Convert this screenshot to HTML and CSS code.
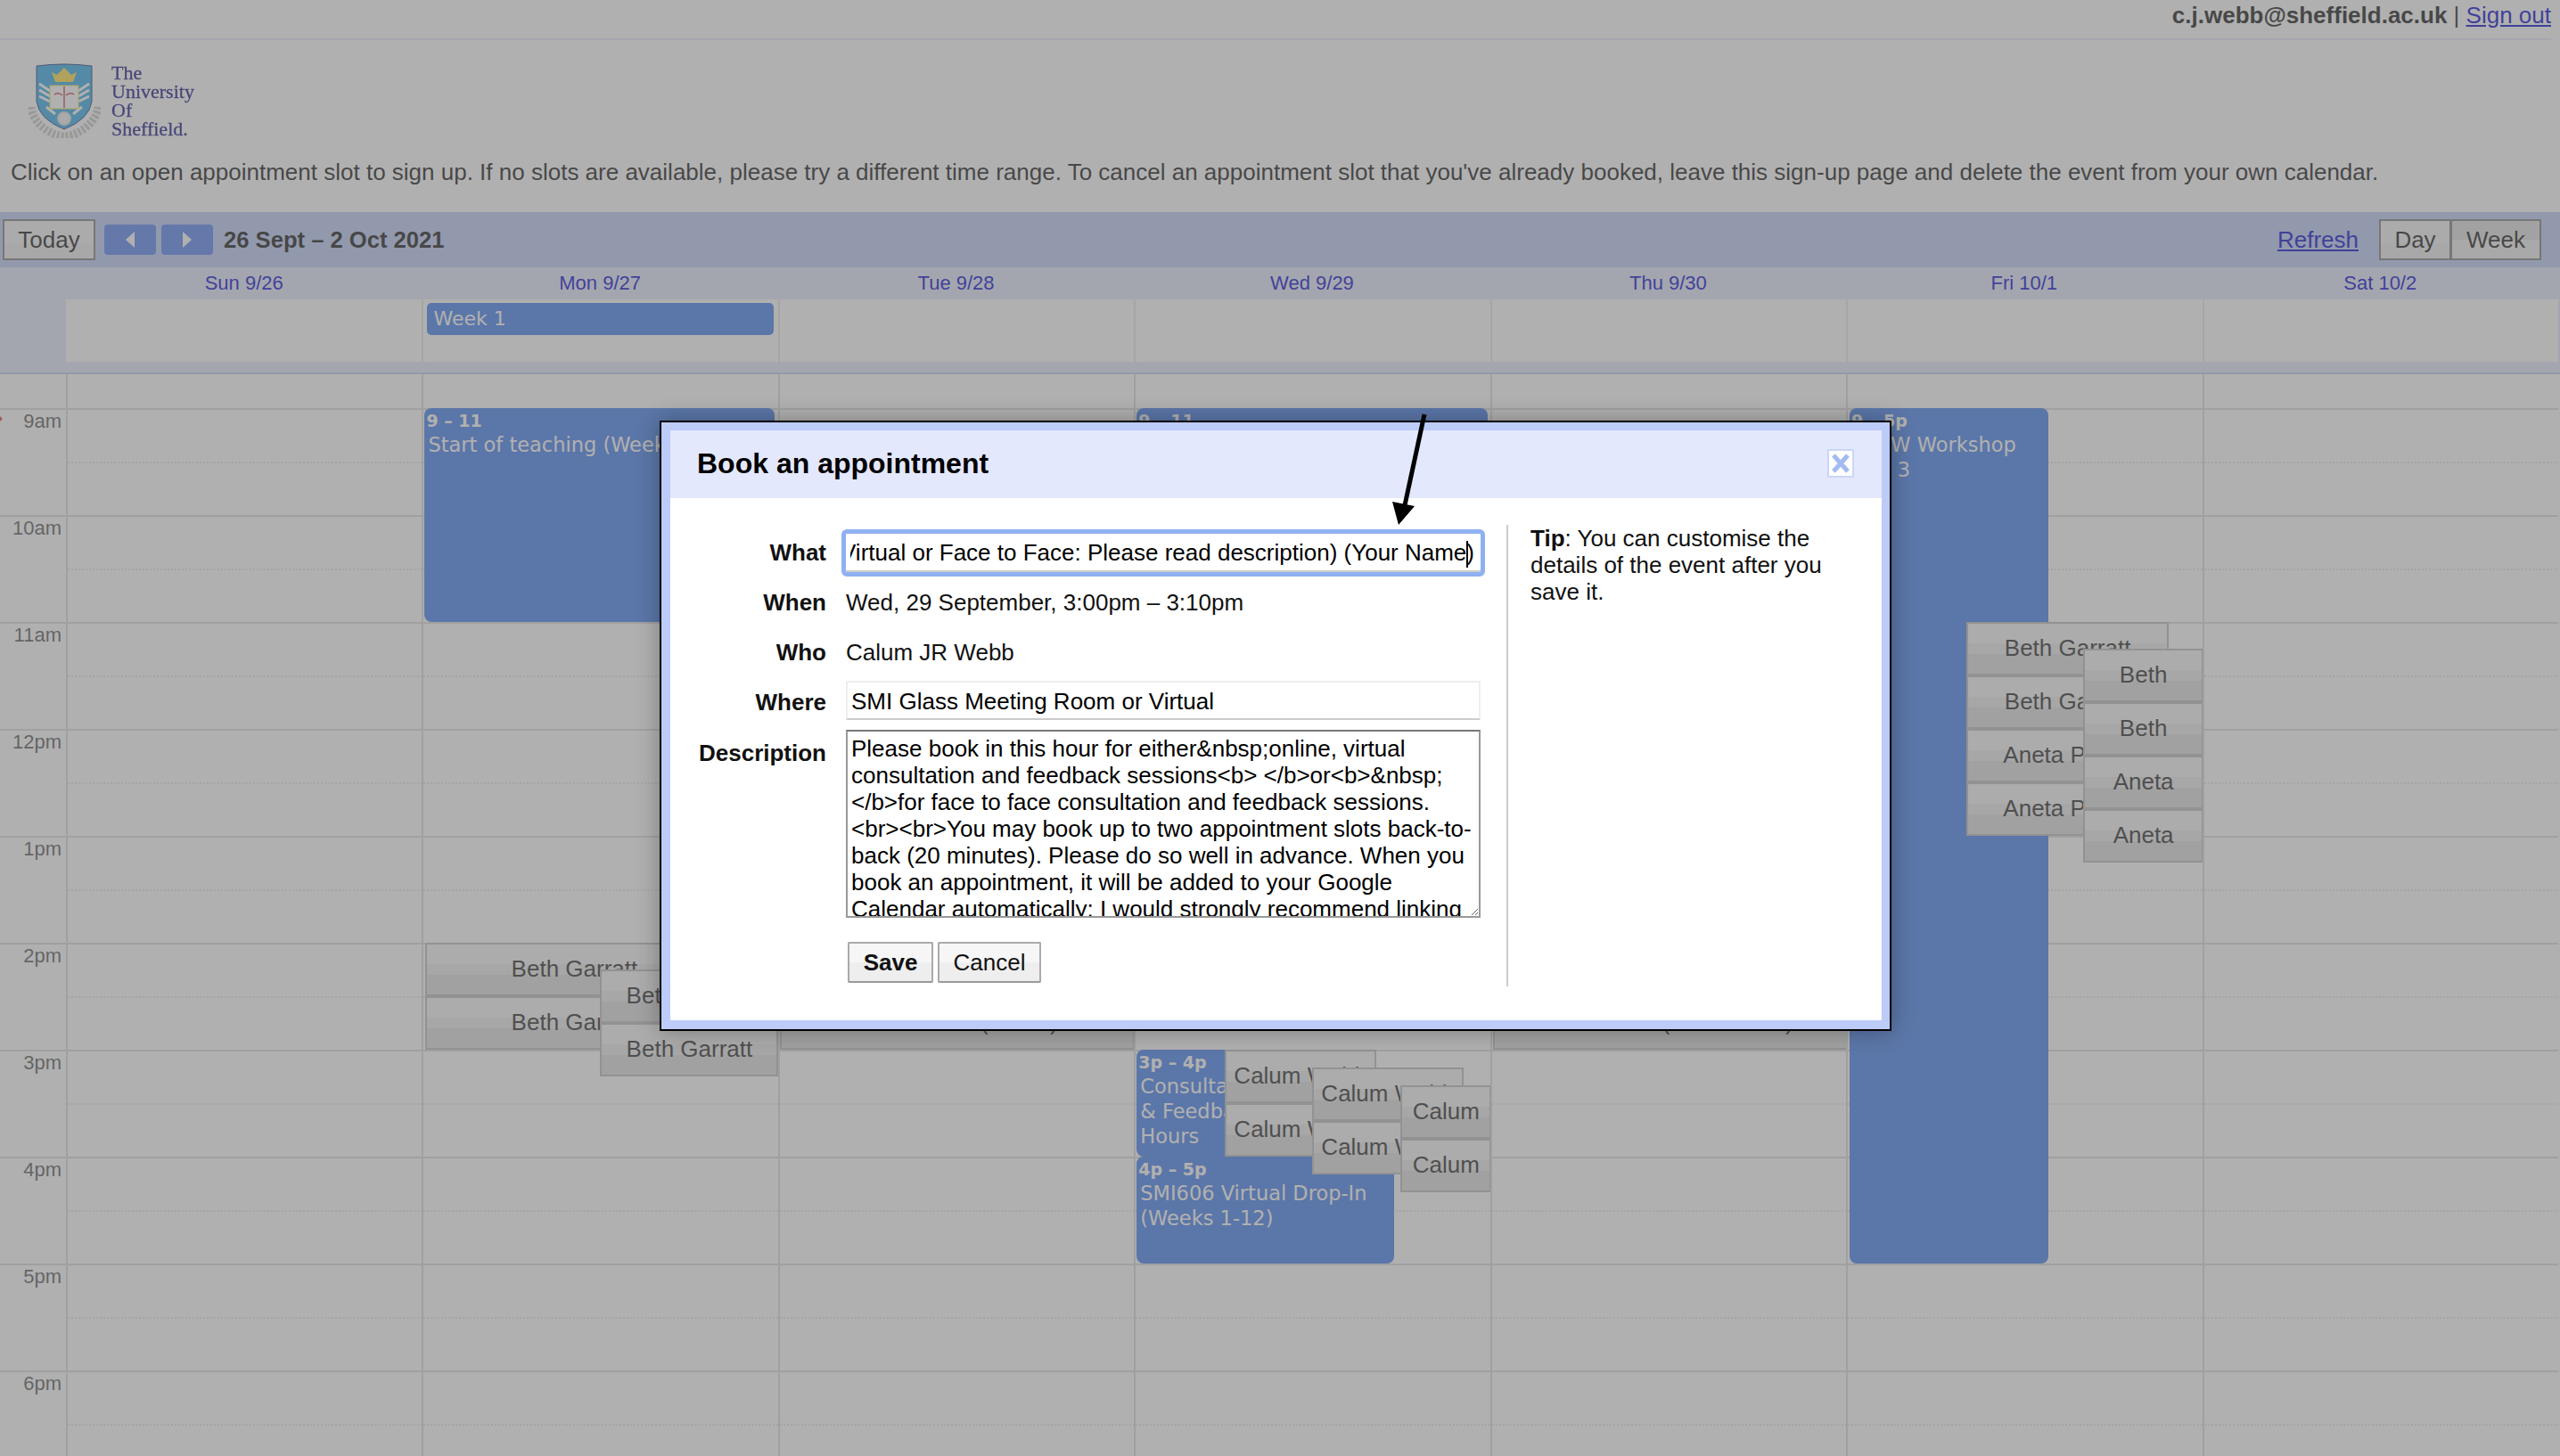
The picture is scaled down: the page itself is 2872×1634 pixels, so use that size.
FILE: index.html
```html
<!DOCTYPE html>
<html lang="en">
  <head>
    <meta charset="UTF-8" />
    <meta name="viewport" content="width=device-width, initial-scale=1.0" />
    <title>Book an appointment</title>
    <link rel="stylesheet" href="styles.css">
  </head>
  <body>
    <div class="userbar">
      <b>c.j.webb@sheffield.ac.uk</b>&nbsp;|&nbsp;<a href="#">Sign out</a>
    </div>

    <div class="brand">
      <svg class="crest" viewBox="0 0 81 85">
        <path class="ribbon" d="M3 50 C4 66 22 82 40 83 C58 82 77 66 78 50" />
        <path class="shield" d="M9 4 Q40 0 71 4 L71 44 Q68 64 40 75 Q12 64 9 44 Z" />
        <path class="crown" d="M26 11 L32 14 L40 6 L48 14 L54 11 L50 22 H30 Z" />
        <path class="rays" d="M12 24 L24 32 M12 31 L24 38 M12 38 L24 44 M68 24 L56 32 M68 31 L56 38 M68 38 L56 44 M20 50 L30 58 M60 50 L50 58" />
        <rect class="book" x="24" y="26" width="32" height="26" />
        <path class="book-mark" d="M29 36 Q34 33 38 37 M42 37 Q47 33 51 36 M40 27 V51" />
        <circle class="rose" cx="40" cy="63" r="7" />
      </svg>
      <div class="brand-name">The<br>University<br>Of<br>Sheffield.</div>
    </div>

    <p class="intro">Click on an open appointment slot to sign up. If no slots are available, please try a different time range. To cancel an appointment slot that you've already booked, leave this sign-up page and delete the event from your own calendar.</p>

    <div class="toolbar">
      <button class="btn today">Today</button>
      <span class="nav-btn"><i class="tri-left"></i></span>
      <span class="nav-btn"><i class="tri-right"></i></span>
      <span class="range">26 Sept – 2 Oct 2021</span>
      <a class="refresh" href="#">Refresh</a>
      <div class="view-switch">
        <button class="btn view-day">Day</button>
        <button class="btn view-week">Week</button>
      </div>
    </div>

    <div class="day-heads">
      <a href="#">Sun 9/26</a>
      <a href="#">Mon 9/27</a>
      <a href="#">Tue 9/28</a>
      <a href="#">Wed 9/29</a>
      <a href="#">Thu 9/30</a>
      <a href="#">Fri 10/1</a>
      <a href="#">Sat 10/2</a>
    </div>

    <div class="allday">
      <div class="allday-cell"></div>
      <div class="allday-cell"><div class="allday-event">Week 1</div></div>
      <div class="allday-cell"></div>
      <div class="allday-cell"></div>
      <div class="allday-cell"></div>
      <div class="allday-cell"></div>
      <div class="allday-cell"></div>
    </div>

    <div class="week">
      <div class="hours">
        <i class="now-mark"></i>
        <div>9am</div>
        <div>10am</div>
        <div>11am</div>
        <div>12pm</div>
        <div>1pm</div>
        <div>2pm</div>
        <div>3pm</div>
        <div>4pm</div>
        <div>5pm</div>
        <div>6pm</div>
      </div>

      <div class="day"></div>

      <div class="day">
        <div class="event mon-teaching"><b>9 – 11</b><span>Start of teaching (Week 1)</span></div>
        <div class="slot beth-a r1">Beth Garratt</div>
        <div class="slot beth-a r2">Beth Garratt</div>
        <div class="slot beth-b r1">Beth Garratt</div>
        <div class="slot beth-b r2">Beth Garratt</div>
      </div>

      <div class="day">
        <div class="slot wide tue-slot">Beth Garratt (Room)</div>
      </div>

      <div class="day">
        <div class="event wed-teaching"><b>9 – 11</b><span>Consultation</span></div>
        <div class="event wed-hours"><b>3p – 4p</b><span>Consultation &amp; Feedback Hours</span></div>
        <div class="event wed-dropin"><b>4p – 5p</b><span>SMI606 Virtual Drop-In (Weeks 1-12)</span></div>
        <div class="slot calum-a r1">Calum Webb</div>
        <div class="slot calum-a r2">Calum Webb</div>
        <div class="slot calum-b r1">Calum Webb</div>
        <div class="slot calum-b r2">Calum Webb</div>
        <div class="slot calum-c r1">Calum Webb</div>
        <div class="slot calum-c r2">Calum Webb</div>
      </div>

      <div class="day">
        <div class="slot wide thu-slot">Beth Garratt (Virtual chat)</div>
      </div>

      <div class="day">
        <div class="event fri-workshop"><b>9 – 5p</b><span>RM W Workshop Wk. 3</span></div>
        <div class="slot fri-a r1">Beth Garratt</div>
        <div class="slot fri-a r2">Beth Garratt</div>
        <div class="slot fri-a r3">Aneta Pxxxx</div>
        <div class="slot fri-a r4">Aneta Pxxxx</div>
        <div class="slot fri-b r1">Beth Garratt</div>
        <div class="slot fri-b r2">Beth Garratt</div>
        <div class="slot fri-b r3">Aneta Pxxxx</div>
        <div class="slot fri-b r4">Aneta Pxxxx</div>
      </div>

      <div class="day"></div>
    </div>

    <div class="backdrop"></div>

    <div class="dialog">
      <div class="dialog-title">
        <span>Book an appointment</span>
        <span class="dialog-close">
          <svg viewBox="0 0 26 28"><path d="M5 5 L21 23 M21 5 L5 23" /></svg>
        </span>
      </div>
      <div class="dialog-body">
        <div class="form">
          <div class="row row-what">
            <label>What</label>
            <div class="what-input"><div class="what-text"><span>Consultation (Virtual or Face to Face: Please read description) (Your Name<i class="caret"></i>)</span></div></div>
          </div>
          <div class="row row-text">
            <label>When</label>
            <div>Wed, 29 September, 3:00pm – 3:10pm</div>
          </div>
          <div class="row row-text">
            <label>Who</label>
            <div>Calum JR Webb</div>
          </div>
          <div class="row row-where">
            <label>Where</label>
            <input class="where-input" type="text" value="SMI Glass Meeting Room or Virtual">
          </div>
          <div class="row row-desc">
            <label>Description</label>
            <textarea class="desc-input">Please book in this hour for either&amp;nbsp;online, virtual consultation and feedback sessions&lt;b&gt; &lt;/b&gt;or&lt;b&gt;&amp;nbsp;&lt;/b&gt;for face to face consultation and feedback sessions.&lt;br&gt;&lt;br&gt;You may book up to two appointment slots back-to-back (20 minutes). Please do so well in advance. When you book an appointment, it will be added to your Google Calendar automatically; I would strongly recommend linking it to your phone.</textarea>
          </div>
          <div class="actions">
            <button class="dlg-btn save">Save</button>
            <button class="dlg-btn cancel">Cancel</button>
          </div>
        </div>
        <div class="tip"><b>Tip</b>: You can customise the details of the event after you save it.</div>
      </div>
    </div>

    <svg class="arrow" viewBox="0 0 50 130">
      <path d="M43 2 L21 104" />
      <polygon points="14,126 7,100 32,105" />
    </svg>
  </body>
</html>
```

FILE: styles.css
```css
* {
  box-sizing: border-box;
  margin: 0;
  padding: 0;
}

html, body {
  height: 100%;
}

body {
  position: relative;
  overflow: hidden;
  background: #fff;
  color: #111;
  font-family: "Liberation Sans", Arial, sans-serif;
  font-size: 26px;
  line-height: 30px;
}

a {
  color: #0000cc;
}

/* Top of the page */
.userbar {
  height: 45px;
  margin-right: 10px;
  border-bottom: 2px solid #e3e8fc;
  padding-top: 2px;
  text-align: right;
}

.brand {
  display: flex;
  gap: 12px;
  height: 85px;
  margin: 25px 0 0 32px;
}

.crest {
  width: 81px;
  height: 85px;
  filter: blur(0.6px);
}

.shield { fill: #2ea8e6; stroke: #2b3a80; stroke-width: 1; }
.ribbon { fill: none; stroke: #c8c8c8; stroke-width: 9; stroke-dasharray: 3 2; }
.crown { fill: #ffe040; }
.rays { fill: none; stroke: #fff; stroke-width: 3; }
.book { fill: #fff; stroke: #ffe040; }
.book-mark { fill: none; stroke: #d04050; stroke-width: 1.5; }
.rose { fill: #f2f2f2; stroke: #ddd; stroke-width: 2; }

.brand-name {
  padding-top: 1px;
  color: #0e0e7f;
  font-family: "Liberation Serif", serif;
  font-size: 22px;
  line-height: 21px;
  -webkit-text-stroke: 0.3px #0e0e7f;
  filter: blur(0.4px);
}

.intro {
  margin: 23px 0 30px 12px;
  white-space: nowrap;
}

/* Calendar toolbar */
.toolbar {
  display: flex;
  align-items: center;
  height: 62px;
  padding: 0 21px 0 3px;
  background: #bccbf8;
}

.btn {
  height: 46px;
  border: 2px solid #7d7d7d;
  background: linear-gradient(#f4f4f4 60%, #ededed 60%);
  color: #111;
  font: inherit;
}

.today {
  width: 104px;
}

.nav-btn {
  display: flex;
  align-items: center;
  justify-content: center;
  width: 58px;
  height: 34px;
  margin-left: 6px;
  border-radius: 4px;
  background: #527ff1;
}

.today + .nav-btn {
  margin-left: 10px;
}

.tri-left, .tri-right {
  border-top: 9px solid transparent;
  border-bottom: 9px solid transparent;
}

.tri-left { border-right: 10px solid #fff; }
.tri-right { border-left: 10px solid #fff; }

.range {
  margin-left: 12px;
  font-size: 25.6px;
  font-weight: bold;
}

.refresh {
  margin: 0 23px 0 auto;
}

.view-switch {
  display: flex;
}

.view-day { width: 81px; }
.view-week {
  width: 102px;
  margin-left: -1px;
  background: linear-gradient(#e0e0e0 50%, #eeeeee 50%);
}

/* Day headings and the all day row */
.day-heads, .allday, .week {
  display: grid;
  grid-template-columns: 74px repeat(7, 399.43px);
  width: 2872px;
}

.day-heads {
  height: 36px;
  background: #e3e8fc;
  font-size: 22px;
  line-height: 36px;
  text-align: center;
}

.day-heads a {
  text-decoration: none;
}

.day-heads a:first-child {
  grid-column: 2;
}

.allday {
  height: 84px;
  padding-bottom: 12px;
  border-bottom: 2px solid #bccbf8;
  background: #e3e8fc;
}

.allday-cell {
  background: #fff;
  border-left: 2px solid #e8e8e8;
}

.allday-cell:first-child {
  grid-column: 2;
  border-left: 0;
}

.allday-event {
  height: 36px;
  margin: 4px 5px 0 4px;
  padding-left: 7px;
  border-radius: 5px;
  background: #3f7ced;
  color: #fff;
  font-family: "DejaVu Sans", sans-serif;
  font-size: 22px;
  line-height: 36px;
}

/* Week grid */
.week {
  height: 1214px;
  overflow: hidden;
}

.hours {
  position: relative;
  padding-top: 38px;
  background: linear-gradient(#dadada 2px, transparent 2px) 0 38px / 100% 120px;
  color: #555;
  font-size: 22px;
  line-height: 26px;
  text-align: right;
}

.hours div {
  height: 120px;
  padding: 2px 5px 0 0;
}

.now-mark {
  position: absolute;
  left: 0;
  top: 47px;
  border-top: 3px solid transparent;
  border-bottom: 3px solid transparent;
  border-left: 3px solid #e04040;
}

.day {
  position: relative;
  border-left: 2px solid #dadada;
  background: linear-gradient(#dadada 2px, transparent 2px) 0 38px / 100% 120px;
}

.day::before {
  content: "";
  position: absolute;
  inset: 0;
  background: linear-gradient(#e4e4e4 2px, transparent 2px) 0 98px / 100% 120px;
  -webkit-mask: repeating-linear-gradient(90deg, #000 0 2px, transparent 2px 4px);
  mask: repeating-linear-gradient(90deg, #000 0 2px, transparent 2px 4px);
}

.event {
  position: absolute;
  overflow: hidden;
  padding: 1px 4px 0;
  border-radius: 8px;
  background: #3f7ced;
  color: #fff;
  font-family: "DejaVu Sans", sans-serif;
  font-size: 22.5px;
  line-height: 28px;
}

.event b {
  display: block;
  margin-left: -2px;
  font-size: 19px;
  line-height: 26px;
}

.event span {
  display: block;
}

.mon-teaching { left: 1px; top: 38px; width: 393px; height: 240px; }
.wed-teaching { left: 1px; top: 38px; width: 394px; height: 240px; }
.wed-hours { left: 1px; top: 758px; width: 165px; height: 120px; }
.wed-dropin { left: 1px; top: 878px; width: 289px; height: 120px; }
.fri-workshop { left: 2px; top: 38px; width: 223px; height: 960px; }

.slot {
  position: absolute;
  height: 60px;
  overflow: hidden;
  border: 2px solid #bababa;
  background: linear-gradient(#f5f5f5 40%, #ebebeb 40%, #ebebeb 60%, #dedede 60%, #dcdcdc);
  color: #222;
  line-height: 54px;
  text-align: center;
}

.beth-a { left: 2px; width: 334px; }
.beth-a.r1 { top: 638px; }
.beth-a.r2 { top: 698px; }
.beth-b { left: 198px; width: 200px; }
.beth-b.r1 { top: 668px; }
.beth-b.r2 { top: 728px; }

.wide { width: 398px; top: 698px; }
.tue-slot { left: 0; padding-right: 10px; }
.thu-slot { left: 1px; padding-right: 20px; }

.calum-a { left: 100px; width: 170px; }
.calum-a.r1 { top: 758px; }
.calum-a.r2 { top: 818px; }
.calum-b { left: 198px; width: 170px; }
.calum-b.r1 { top: 778px; }
.calum-b.r2 { top: 838px; }
.calum-c { left: 297px; width: 102px; }
.calum-c.r1 { top: 798px; }
.calum-c.r2 { top: 858px; }

.fri-a { left: 133px; width: 227px; }
.fri-a.r1 { top: 278px; }
.fri-a.r2 { top: 338px; }
.fri-a.r3 { top: 398px; }
.fri-a.r4 { top: 458px; }
.fri-b { left: 264px; width: 135px; }
.fri-b.r1 { top: 308px; }
.fri-b.r2 { top: 368px; }
.fri-b.r3 { top: 428px; }
.fri-b.r4 { top: 488px; }

/* Grey layer behind the dialog */
.backdrop {
  position: absolute;
  inset: 0;
  background: rgba(114, 114, 114, 0.56);
}

.dialog {
  position: absolute;
  left: 740px;
  top: 472px;
  width: 1382px;
  height: 685px;
  border: 2px solid #000;
  background: #bccbf8;
  padding: 9px 9px 10px 10px;
  box-shadow: 0 0 24px rgba(0, 0, 0, 0.3);
}

.dialog-title {
  display: flex;
  align-items: center;
  justify-content: space-between;
  height: 76px;
  padding: 0 31px 2px 30px;
  background: #e3e8fc;
  color: #000;
  font-size: 32px;
  font-weight: bold;
}

.dialog-close {
  display: flex;
  width: 30px;
  height: 32px;
  border: 2px solid #cbd6f8;
  background: #fff;
}

.dialog-close path {
  fill: none;
  stroke: #a3bbf2;
  stroke-width: 5;
}

.dialog-body {
  display: flex;
  height: 586px;
  padding-top: 30px;
  background: #fff;
}

.form {
  width: 938px;
  padding-top: 4px;
}

.row {
  display: flex;
  align-items: center;
  gap: 22px;
}

.row label {
  width: 175px;
  flex: none;
  font-weight: bold;
  text-align: right;
}

.row-what { height: 54px; }
.row-text { height: 56px; padding-top: 1px; }
.row-where { height: 44px; margin-top: 5px; }
.row-where label { padding-top: 3px; }
.row-desc { height: 211px; margin-top: 11px; align-items: flex-start; }
.row-desc label { padding-top: 11px; }

.what-input {
  width: 712px;
  height: 43px;
  padding: 0 7px 0 5px;
  border-bottom: 2px solid #ccc;
  border-radius: 1px;
  outline: 5.5px solid #8fb1f2;
  line-height: 42px;
}

.what-text {
  display: flex;
  justify-content: flex-end;
  overflow: hidden;
  white-space: nowrap;
}

.what-text span {
  flex: none;
  color: #000;
}

.caret {
  display: inline-block;
  width: 2px;
  height: 30px;
  margin: 0 -2px 0 0;
  background: #000;
  vertical-align: middle;
}

.where-input {
  width: 712px;
  height: 44px;
  padding: 3px 4px 0;
  border: 2px solid #eee;
  border-bottom-color: #ccc;
  color: #000;
  font: inherit;
  outline: 0;
}

.desc-input {
  width: 712px;
  height: 211px;
  padding: 4px;
  border: 2px solid #999;
  border-top-color: #777;
  color: #000;
  font: inherit;
  line-height: 30px;
  overflow: hidden;
  outline: 0;
  resize: both;
}

.actions {
  display: flex;
  gap: 5px;
  margin: 27px 0 0 199px;
}

.dlg-btn {
  height: 46px;
  border: 2px solid #aaa;
  border-bottom-color: #999;
  border-radius: 2px;
  background: linear-gradient(#f6f6f6 50%, #eeeeee 50%);
  color: #111;
  font: inherit;
}

.save { width: 96px; font-weight: bold; }
.cancel { width: 116px; }

.tip {
  width: 400px;
  height: 518px;
  padding: 0 44px 0 25px;
  border-left: 2px solid #ccc;
}

/* Annotation drawn on top of the screenshot */
.arrow {
  position: absolute;
  left: 1555px;
  top: 463px;
  width: 50px;
  height: 130px;
}

.arrow path {
  fill: none;
  stroke: #000;
  stroke-width: 5;
}
```
